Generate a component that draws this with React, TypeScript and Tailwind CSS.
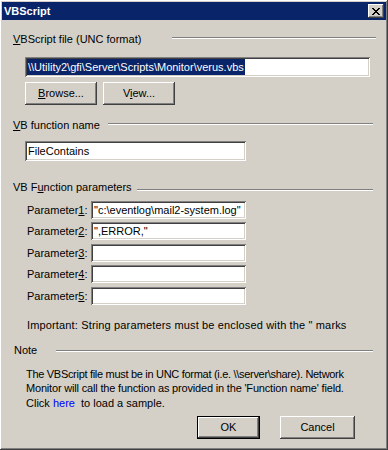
import React from "react";

const raised =
  "shadow-[inset_-1px_-1px_0_#404040,inset_1px_1px_0_#ffffff,inset_-2px_-2px_0_#808080,inset_2px_2px_0_#d4d0c8]";
const sunken =
  "shadow-[inset_1px_1px_0_#808080,inset_-1px_-1px_0_#ffffff,inset_2px_2px_0_#404040,inset_-2px_-2px_0_#d4d0c8]";

function CloseGlyph() {
  const rows = ["XX....XX", ".XX..XX.", "..XXXX..", "...XX...", "..XXXX..", ".XX..XX.", "XX....XX"];
  return (
    <svg width="8" height="7" viewBox="0 0 8 7" shapeRendering="crispEdges">
      {rows.flatMap((r, y) =>
        r.split("").map((c, x) => (c === "X" ? <rect key={`${x}-${y}`} x={x} y={y} width="1" height="1" fill="#000" /> : null))
      )}
    </svg>
  );
}

function Header({ children, line, drop, right = 0 }: { children: React.ReactNode; line: number; drop: number; right?: number }) {
  return (
    <div className="flex h-[13px] leading-[13px]">
      <span>{children}</span>
      <div
        className="ml-auto h-[2px] border-t border-b border-t-[#808080] border-b-white"
        style={{ width: line, marginTop: drop, marginRight: right }}
      />
    </div>
  );
}

function Field({ w, children }: { w: number; children?: React.ReactNode }) {
  return (
    <div className={`h-[18px] bg-white ${sunken} pl-[3px] leading-[18px] whitespace-nowrap`} style={{ width: w }}>
      {children}
    </div>
  );
}

function Button({ w, children, isDefault }: { w: number; children: React.ReactNode; isDefault?: boolean }) {
  return (
    <div
      className={`h-[23px] flex items-center justify-center ${isDefault ? "border border-black" : ""}`}
      style={{ width: w }}
    >
      <div className={`w-full h-full flex items-center justify-center ${raised}`}>{children}</div>
    </div>
  );
}

export default function App() {
  const params = [
    { n: "1", v: '"c:\\eventlog\\mail2-system.log"', mt: "mt-[7px]" },
    { n: "2", v: '",ERROR,"', mt: "mt-[3px]" },
    { n: "3", v: "", mt: "mt-[4px]" },
    { n: "4", v: "", mt: "mt-[3px]" },
    { n: "5", v: "", mt: "mt-[4px]" },
  ];

  return (
    <div
      className="w-[388px] h-[450px] bg-[#d4d0c8] text-black text-[11px] pt-[2px] px-[2px] shadow-[inset_-1px_-1px_0_#404040,inset_1px_1px_0_#ffffff,inset_-2px_-2px_0_#808080] flex flex-col"
      style={{ fontFamily: '"Liberation Sans", Arial, sans-serif' }}
    >
      <div className="h-[18px] bg-[#0a246a] flex items-center pl-[2px] pr-[2px]">
        <span className="text-white font-bold text-[11px] leading-[13px]">VBScript</span>
        <div className={`ml-auto w-[16px] h-[14px] bg-[#d4d0c8] ${raised} flex items-center justify-center`}>
          <CloseGlyph />
        </div>
      </div>

      <div className="flex flex-col pl-[11px] pr-[10px]">
        <div className="mt-[13px]">
          <Header line={204} drop={4}>
            <span className="underline">V</span>BScript file (UNC format)
          </Header>
        </div>

        <div className={`mt-[11px] ml-[12px] w-[345px] h-[20px] bg-white ${sunken} pl-[2px] pt-[2px] whitespace-nowrap`}>
          <span className="bg-[#0a246a] text-white inline-block h-[16px] leading-[16px] px-[1px]">
            \\Utility2\gfi\Server\Scripts\Monitor\verus.vbs
          </span>
        </div>

        <div className="mt-[5px] ml-[12px] flex gap-[6px]">
          <Button w={72}>
            <span>
              <span className="underline">B</span>rowse...
            </span>
          </Button>
          <Button w={72}>
            <span>
              V<span className="underline">i</span>ew...
            </span>
          </Button>
        </div>

        <div className="mt-[14px]">
          <Header line={265} drop={4} right={3}>
            <span className="underline">V</span>B function name
          </Header>
        </div>

        <div className={`mt-[9px] ml-[12px] w-[221px] h-[20px] bg-white ${sunken} pl-[3px] leading-[20px]`}>FileContains</div>

        <div className="mt-[20px]">
          <Header line={236} drop={8} right={3}>
            VB F<span className="underline">u</span>nction parameters
          </Header>
        </div>

        {params.map((p) => (
          <div key={p.n} className={`${p.mt} flex items-center ml-[14px]`}>
            <span className="w-[64px]">
              Parameter<span className="underline">{p.n}</span>:
            </span>
            <Field w={155}>{p.v}</Field>
          </div>
        ))}

        <div className="mt-[14px] ml-[14px] leading-[13px] tracking-[0.15px]">
          Important: String parameters must be enclosed with the &quot; marks
        </div>

        <div className="mt-[12px] ml-[1px]">
          <Header line={317} drop={6} right={3}>
            Note
          </Header>
        </div>

        <div className="mt-[10px] ml-[13px] leading-[14px] whitespace-nowrap">
          <div className="tracking-[-0.3px]">The VBScript file must be in UNC format (i.e. \\server\share). Network</div>
          <div className="tracking-[-0.18px]">Monitor will call the function as provided in the 'Function name' field.</div>
          <div className="mt-[1px]">
            Click <span className="text-[#0000ff]">here</span> &nbsp;to load a sample.
          </div>
        </div>

        <div className="mt-[6px] flex justify-end gap-[20px] mr-[21px]">
          <Button w={63} isDefault>
            OK
          </Button>
          <Button w={75}>Cancel</Button>
        </div>
      </div>
    </div>
  );
}
